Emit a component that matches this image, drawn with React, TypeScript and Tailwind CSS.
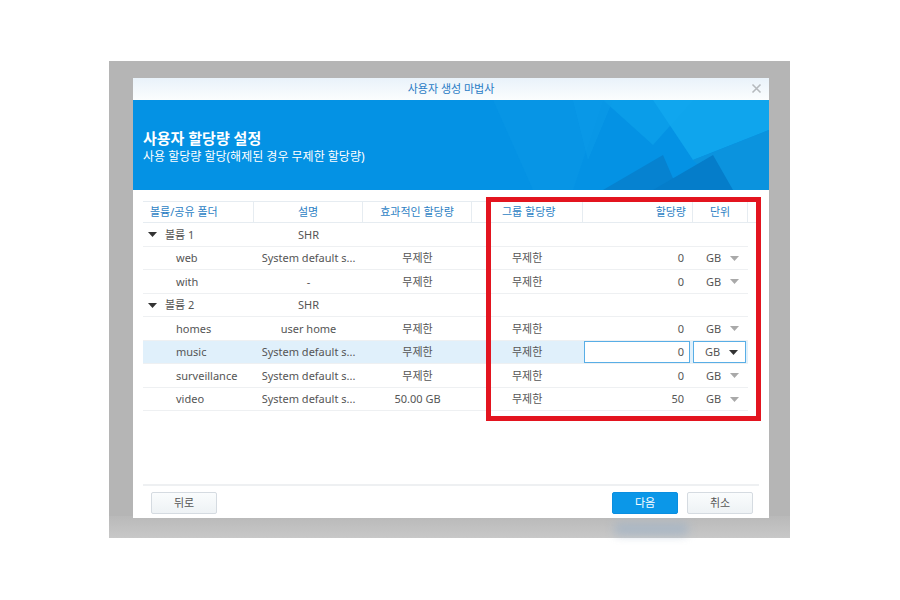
import React from "react";

const FONT = { fontFamily: '"Noto Sans", "Noto Sans CJK KR", sans-serif' };

type Row =
  | { kind: "volume"; name: string; raid: string }
  | {
      kind: "share";
      name: string;
      desc: string;
      effective: string;
      group: string;
      quota: string;
      active?: boolean;
    };

const ROWS: Row[] = [
  { kind: "volume", name: "볼륨 1", raid: "SHR" },
  { kind: "share", name: "web", desc: "System default s...", effective: "무제한", group: "무제한", quota: "0" },
  { kind: "share", name: "with", desc: "-", effective: "무제한", group: "무제한", quota: "0" },
  { kind: "volume", name: "볼륨 2", raid: "SHR" },
  { kind: "share", name: "homes", desc: "user home", effective: "무제한", group: "무제한", quota: "0" },
  { kind: "share", name: "music", desc: "System default s...", effective: "무제한", group: "무제한", quota: "0", active: true },
  { kind: "share", name: "surveillance", desc: "System default s...", effective: "무제한", group: "무제한", quota: "0" },
  { kind: "share", name: "video", desc: "System default s...", effective: "50.00 GB", group: "무제한", quota: "50" },
];

function Caret({ dark }: { dark?: boolean }) {
  return (
    <svg width="9" height="5" viewBox="0 0 9 5" className="shrink-0">
      <path d="M0 0h9L4.5 5z" fill={dark ? "#333" : "#a9a9a9"} />
    </svg>
  );
}

function Banner() {
  return (
    <div className="relative h-[90px] overflow-hidden bg-[#0492e4]">
      <svg className="absolute inset-0" width="636" height="90" viewBox="0 0 636 90">
        <polygon points="360,0 470,0 440,90 400,90" fill="#0795e5" />
        <polygon points="470,0 560,0 520,45" fill="#0a9de9" />
        <polygon points="520,0 636,0 636,30 560,60" fill="#12a8ee" opacity="0.85" />
        <polygon points="560,60 636,30 636,90 590,90" fill="#0b93de" />
        <polygon points="470,90 530,55 545,90" fill="#0682d0" />
        <polygon points="520,90 580,55 600,90" fill="#057dca" />
        <polygon points="440,0 480,0 455,60" fill="#0c9be7" opacity="0.6" />
      </svg>
      <div className="relative px-[10px] pt-[28px] text-white">
        <div className="text-[15px] font-bold leading-[20px]">사용자 할당량 설정</div>
        <div className="text-[12px] leading-[18px]">사용 할당량 할당(해제된 경우 무제한 할당량)</div>
      </div>
    </div>
  );
}

function HeaderCell({ w, children, className = "" }: { w: string; children?: React.ReactNode; className?: string }) {
  return (
    <div className={`${w} flex h-full items-center border-r border-[#e6ecf1] text-[11px] text-[#2d7fc4] ${className}`}>
      {children}
    </div>
  );
}

function TableRow({ row }: { row: Row }) {
  if (row.kind === "volume") {
    return (
      <div className="flex h-[23.5px] items-center border-b border-[#eef0f2] pt-[1px] text-[11px] text-[#555]">
        <div className="flex w-[111px] items-center gap-[8px] pl-[5px]">
          <Caret dark />
          <span>{row.name}</span>
        </div>
        <div className="w-[109px] text-center">{row.raid}</div>
      </div>
    );
  }
  return (
    <div
      className={`flex h-[23.5px] items-center border-b border-[#eef0f2] pt-[1px] text-[11px] text-[#555] ${
        row.active ? "bg-[#e0f0fb]" : ""
      }`}
    >
      <div className="w-[111px] pl-[33px]">{row.name}</div>
      <div className="w-[109px] text-center">{row.desc}</div>
      <div className="w-[109px] text-center">{row.effective}</div>
      <div className="w-[111px] pl-[40px]">{row.group}</div>
      {row.active ? (
        <>
          <div className="flex w-[110px] items-center pl-[1px] pr-[3px]">
            <div className="flex h-[22px] w-full items-center justify-end border border-[#58aee6] bg-white pr-[5px]">
              {row.quota}
            </div>
          </div>
          <div className="flex w-[55px] items-center pr-[2px]">
            <div className="flex h-[22px] w-full items-center justify-between border border-[#58aee6] bg-white pl-[11px] pr-[7px]">
              <span>GB</span>
              <Caret dark />
            </div>
          </div>
        </>
      ) : (
        <>
          <div className="w-[110px] pr-[9px] text-right">{row.quota}</div>
          <div className="flex w-[55px] items-center justify-between pl-[13px] pr-[9px]">
            <span>GB</span>
            <Caret />
          </div>
        </>
      )}
    </div>
  );
}

function Button({ children, primary }: { children: React.ReactNode; primary?: boolean }) {
  return (
    <button
      className={`flex h-[22px] w-[66px] items-center justify-center rounded-[2px] border text-[11px] ${
        primary
          ? "border-[#0a8ee0] bg-[#0b97e8] text-white"
          : "border-[#d5dbe1] bg-gradient-to-b from-[#fafcfd] to-[#eef2f5] text-[#555]"
      }`}
    >
      {children}
    </button>
  );
}

export default function App() {
  return (
    <div className="h-[600px] w-[900px] bg-white pl-[109px] pt-[61px]" style={FONT}>
      <div className="relative h-[477px] w-[681px] bg-[#b5b5b5] pl-[24px] pt-[17px]">
        {/* blurred reflection under the dialog */}
        <div className="absolute bottom-0 left-0 h-[22px] w-full bg-gradient-to-b from-[#b9b9b9] to-[#c8c8c8]" />
        <div className="absolute bottom-[3px] left-[505px] h-[12px] w-[75px] rounded-full bg-[#9fb2c6] opacity-70 blur-[5px]" />

        <div className="relative flex h-[440px] w-[636px] flex-col bg-white">
          {/* title bar */}
          <div className="relative flex h-[22px] items-center justify-center bg-gradient-to-b from-[#e9f2fa] to-[#fbfdfe]">
            <span className="text-[11px] text-[#2a7cc5]">사용자 생성 마법사</span>
            <svg className="absolute right-[7px] top-[5px]" width="11" height="11" viewBox="0 0 11 11">
              <path d="M1.5 1.5l8 8M9.5 1.5l-8 8" stroke="#b5b9bd" strokeWidth="1.6" />
            </svg>
          </div>

          <Banner />

          {/* grid */}
          <div className="relative flex-1 px-[10px] pt-[11px]">
            <div className="flex h-[22px] items-center border-t border-b border-[#e6ecf1]">
              <HeaderCell w="w-[111px]" className="pl-[7px]">볼륨/공유 폴더</HeaderCell>
              <HeaderCell w="w-[109px]" className="justify-center">설명</HeaderCell>
              <HeaderCell w="w-[109px]" className="justify-center">효과적인 할당량</HeaderCell>
              <HeaderCell w="w-[111px]" className="pl-[30px]">그룹 할당량</HeaderCell>
              <HeaderCell w="w-[110px]" className="justify-end pr-[6px]">할당량</HeaderCell>
              <HeaderCell w="w-[55px]" className="justify-center">단위</HeaderCell>
              <div className="w-[11px]" />
            </div>
            <div className="w-[605px]">
              {ROWS.map((r, i) => (
                <TableRow key={i} row={r} />
              ))}
            </div>

            {/* highlight box over the quota columns */}
            <div className="absolute left-[353px] top-[7px] h-[224px] w-[275px] border-[5px] border-[#e3141f]" />
          </div>

          {/* footer */}
          <div className="mx-[10px] border-t-2 border-[#eef0f2]" />
          <div className="flex h-[32px] items-start justify-between pl-[18px] pr-[16px] pt-[6px]">
            <Button>뒤로</Button>
            <div className="flex gap-[9px]">
              <Button primary>다음</Button>
              <Button>취소</Button>
            </div>
          </div>
        </div>
      </div>
    </div>
  );
}
